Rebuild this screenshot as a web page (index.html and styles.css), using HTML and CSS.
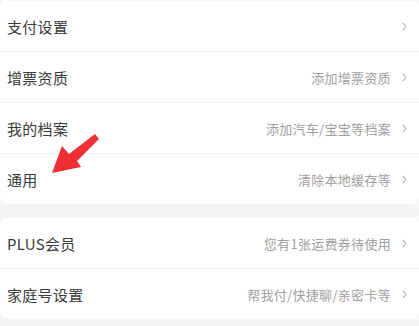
FILE: index.html
```html
<!DOCTYPE html>
<html lang="zh">
<head>
<meta charset="utf-8">
<link rel="stylesheet" href="styles.css">
</head>
<body>
<div class="page">
  <div class="card">
    <div class="row"><span class="label">支付设置</span><span class="right"><svg class="chev" viewBox="0 0 5 9"><polyline points="0.8,0.8 4,4.5 0.8,8.2"/></svg></span></div>
    <div class="row"><span class="label">增票资质</span><span class="right"><span class="hint">添加增票资质</span><svg class="chev" viewBox="0 0 5 9"><polyline points="0.8,0.8 4,4.5 0.8,8.2"/></svg></span></div>
    <div class="row"><span class="label">我的档案</span><span class="right"><span class="hint">添加汽车/宝宝等档案</span><svg class="chev" viewBox="0 0 5 9"><polyline points="0.8,0.8 4,4.5 0.8,8.2"/></svg></span></div>
    <div class="row"><span class="label">通用</span><span class="right"><span class="hint">清除本地缓存等</span><svg class="chev" viewBox="0 0 5 9"><polyline points="0.8,0.8 4,4.5 0.8,8.2"/></svg></span></div>
  </div>
  <div class="card">
    <div class="row"><span class="label">PLUS会员</span><span class="right"><span class="hint">您有1张运费券待使用</span><svg class="chev" viewBox="0 0 5 9"><polyline points="0.8,0.8 4,4.5 0.8,8.2"/></svg></span></div>
    <div class="row"><span class="label">家庭号设置</span><span class="right"><span class="hint">帮我付/快捷聊/亲密卡等</span><svg class="chev" viewBox="0 0 5 9"><polyline points="0.8,0.8 4,4.5 0.8,8.2"/></svg></span></div>
  </div>
  <svg class="arrow" viewBox="0 0 60 50" width="60" height="50">
    <polygon points="45,0 49,5 27,27 31,33 2,39 12,12 19,20"/>
  </svg>
</div>
</body>
</html>
```
FILE: styles.css
```css
html, body {
  margin: 0;
  padding: 0;
  background: #f5f5f5;
}
body {
  font-family: "Noto Sans CJK SC", "Noto Sans", sans-serif;
  width: 419px;
  height: 326px;
  overflow: hidden;
}
.page {
  position: relative;
  display: flex;
  flex-direction: column;
  gap: 13px;
}
.card {
  background: #fff;
  border-radius: 8px;
  display: flex;
  flex-direction: column;
}
.row {
  height: 51px;
  display: flex;
  align-items: center;
  justify-content: space-between;
  padding: 0 12px 0 7px;
  border-top: 1px solid #f0f0f0;
  box-sizing: border-box;
}
.card .row:first-child {
  border-top: 1px solid #f7f7f7;
}
.row .label {
  font-size: 15px;
  color: #3a3a3a;
  letter-spacing: 0.3px;
}
.right {
  display: flex;
  align-items: center;
  gap: 11px;
}
.hint {
  font-size: 13px;
  color: #a0a0a0;
  letter-spacing: 0.3px;
}
.chev {
  width: 5px;
  height: 9px;
  fill: none;
  stroke: #8a8a8a;
  stroke-width: 0.9;
}
.arrow {
  position: absolute;
  left: 50px;
  top: 134px;
  fill: #ee2f36;
}
```
